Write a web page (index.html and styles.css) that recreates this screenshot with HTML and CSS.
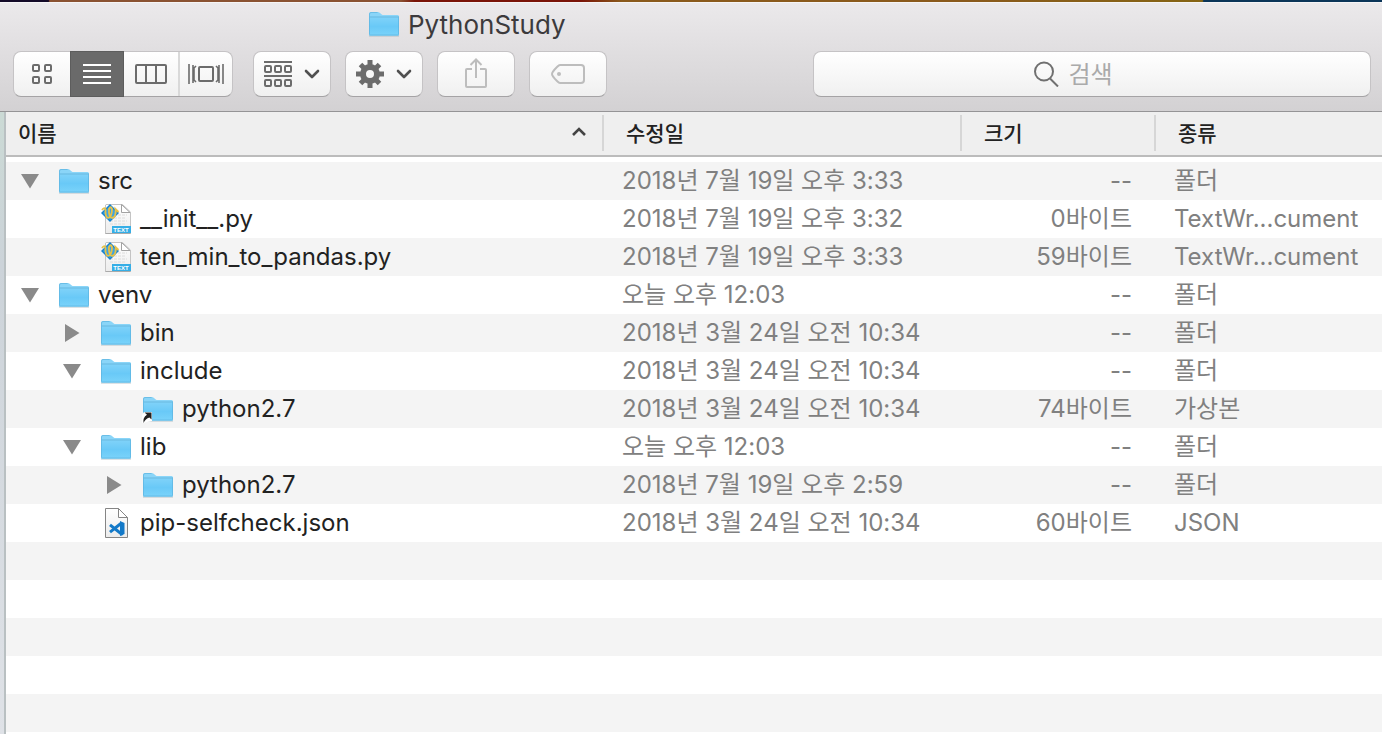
FILE: index.html
```html
<!DOCTYPE html>
<html lang="ko">
<head>
<meta charset="utf-8">
<title>PythonStudy</title>
<link rel="stylesheet" href="styles.css">
</head>
<body>
<svg class="defs" aria-hidden="true">
  <linearGradient id="g-folder" x1="0" y1="0" x2="0" y2="1"><stop offset="0" stop-color="#7fd2f9"/><stop offset=".5" stop-color="#69c9f7"/><stop offset="1" stop-color="#7ad3fa"/></linearGradient>
  <linearGradient id="g-page" x1="0" y1="0" x2="0" y2="1"><stop offset="0" stop-color="#ffffff"/><stop offset="1" stop-color="#ececec"/></linearGradient>
  <symbol id="folder" viewBox="0 0 32 26">
    <path d="M1 24.5H31V25.4H1z" fill="#a9b6bd"/>
    <path d="M1 3Q1 1 3 1H9.6Q11 1 12 2T14.5 4H29.5Q31 4 31 5.5V23Q31 24.5 29.5 24.5H2.5Q1 24.5 1 23z" fill="#8ad5f8"/>
    <path d="M1 6.5H31V23Q31 24.5 29.5 24.5H2.5Q1 24.5 1 23z" fill="url(#g-folder)"/>
    <path d="M1.5 6H30.5" stroke="#64b7e0"/>
    <path d="M1.5 23.5V3Q1.5 1.5 3 1.5H9.5M30.5 5.5V23.5M1.5 24H30.5" fill="none" stroke="#5db4df" stroke-opacity=".7"/>
  </symbol>
  <symbol id="alias" viewBox="0 0 32 26" overflow="visible">
    <use href="#folder" width="32" height="26"/>
    <path d="M0 27V19L2 16H10V25z" fill="#fff"/>
    <path d="M2.5 16.5H9.5V23.5L7.4 21.5Q3.5 22.500 1.5 27Q.5 21.5 5 18.8z" fill="#222"/>
  </symbol>
  <symbol id="textdoc" viewBox="0 0 32 32">
    <path d="M6 1.5H22.5L30.5 9V30.5H5.5V2z" fill="url(#g-page)" stroke="#c4c4c4"/>
    <path d="M5.5 30.5H30.5" stroke="#aaa"/>
    <path d="M21.5 1.5V9.5H30z" fill="#fff" stroke="#a2a2a2"/>
    <path d="M18 12H27M14 15H26M10 18H27M10 21H25" stroke="#dcdcdc" stroke-dasharray="3 1"/>
    <path d="M10 1L19 10L10 19L1 10z" fill="#1681cf"/>
    <path d="M10 3L17 10L10 17L3 10z" fill="#3ba4e3"/>
    <path d="M2 7Q4 4 5.5 6Q5 14 8 15Q12 14 12 6Q11 2.5 9 6Q8.500 14 12 15Q16.5 14 15.500 6L18.500 9" fill="none" stroke="#e6c24a" stroke-width="1.8"/>
    <path d="M12 23H31V30H12z" fill="#36aee6"/>
  </symbol>
  <symbol id="codedoc" viewBox="0 0 32 32">
    <path d="M5.5 1.5H18.5L27.5 10.5V30.5H5.5z" fill="url(#g-page)" stroke="#858585"/>
    <path d="M18.5 1.5V10.5H27.5z" fill="#fff" stroke="#858585"/>
    <path d="M21.500 16V27L10 17.800M21.500 16L10 25.200" fill="none" stroke="#1379c8" stroke-width="3" stroke-linejoin="round"/>
    <path d="M20 14L24.500 16V27L20 29z" fill="#1379c8"/>
  </symbol>
  <symbol id="open" viewBox="0 0 20 20"><path d="M1 3H19L10 17.5z" fill="#8a8a8a"/></symbol>
  <symbol id="closed" viewBox="0 0 20 20"><path d="M3 1V19L17.5 10z" fill="#8a8a8a"/></symbol>
  <symbol id="chevron" viewBox="0 0 16 10"><path d="M2 2L8 8L14 2" fill="none" stroke="#505050" stroke-width="2.6" stroke-linecap="round" stroke-linejoin="round"/></symbol>
</svg>

<div class="wallpaper"></div>
<main class="window">
  <header class="chrome">
    <h1 class="title"><svg class="icon-folder"><use href="#folder"/></svg>PythonStudy</h1>
    <div class="toolbar">
      <div class="views" role="group" aria-label="보기">
        <button class="view" aria-label="아이콘"><svg width="22" height="22" fill="none" stroke="#6c6c6c" stroke-width="2"><rect x="2" y="2" width="6" height="6" rx="1"/><rect x="14" y="2" width="6" height="6" rx="1"/><rect x="2" y="14" width="6" height="6" rx="1"/><rect x="14" y="14" width="6" height="6" rx="1"/></svg></button>
        <button class="view active" aria-label="목록" aria-pressed="true"><svg width="28" height="20" stroke="#fff" stroke-width="2"><path d="M0 1H28M0 7H28M0 13H28M0 19H28"/></svg></button>
        <button class="view" aria-label="계층"><svg width="32" height="20" fill="none" stroke="#6c6c6c" stroke-width="2"><rect x="1" y="1" width="30" height="18" rx="1"/><path d="M11 1V19M21 1V19"/></svg></button>
        <button class="view split" aria-label="갤러리"><svg width="36" height="20" fill="none" stroke="#6c6c6c" stroke-width="2"><rect x="11" y="3" width="14" height="14" rx="1"/><path d="M1 0V20M35 0V20M8 2L6 4V16L8 18M28 2L30 4V16L28 18M5 1V19M31 1V19" stroke-width="1.6"/></svg></button>
      </div>
      <button class="tool arrange" aria-label="정렬"><svg width="28" height="26" fill="none" stroke="#6c6c6c" stroke-width="2"><path d="M0 1H28M0 15H28"/><rect x="1" y="5" width="6" height="6" rx="1"/><rect x="11" y="5" width="6" height="6" rx="1"/><rect x="21" y="5" width="6" height="6" rx="1"/><rect x="1" y="19" width="6" height="6" rx="1"/><rect x="11" y="19" width="6" height="6" rx="1"/><rect x="21" y="19" width="6" height="6" rx="1"/></svg><svg class="icon-chevron"><use href="#chevron"/></svg></button>
      <button class="tool" aria-label="동작"><svg width="28" height="28" viewBox="-14 -14 28 28"><circle r="7" fill="none" stroke="#6c6c6c" stroke-width="6"/><path d="M0 -14V-8M0 14V8M-14 0H-8M14 0H8M-9.5 -9.5L-6 -6M9.5 9.5L6 6M-9.5 9.5L-6 6M9.5 -9.5L6 -6" stroke="#6c6c6c" stroke-width="5"/></svg><svg class="icon-chevron"><use href="#chevron"/></svg></button>
      <button class="tool" aria-label="공유"><svg width="24" height="32" fill="none" stroke="#bdbdbd" stroke-width="2"><path d="M8 11H3Q2 11 2 12V28Q2 29 3 29H21Q22 29 22 28V12Q22 11 21 11H16M12 20V2M6.5 7L12 1.5L17.5 7"/></svg></button>
      <button class="tool" aria-label="태그"><svg width="34" height="20" fill="none" stroke="#bdbdbd" stroke-width="2"><path d="M9 1H30Q33 1 33 4V16Q33 19 30 19H9Q8 19 6 17Q1 12 1 10Q1 8 6 3Q8 1 9 1z"/><circle cx="8" cy="10" r="2" fill="#bdbdbd" stroke="none"/></svg></button>
      <label class="search"><svg width="25" height="26" fill="none" stroke="#707070" stroke-width="2"><circle cx="10" cy="10.5" r="9"/><path d="M16 17.5L24 25.5"/></svg><input type="search" placeholder="검색" aria-label="검색"></label>
    </div>
  </header>

  <div class="listing">
    <table class="files">
      <colgroup><col><col class="col-date"><col class="col-size"><col class="col-kind"></colgroup>
      <thead>
        <tr>
          <th aria-sort="ascending"><div class="head first"><span>이름</span><svg width="16" height="10"><path d="M2 8L8 2L14 8" fill="none" stroke="#444" stroke-width="2.6"/></svg></div></th>
          <th><div class="head">수정일</div></th>
          <th><div class="head">크기</div></th>
          <th><div class="head last">종류</div></th>
        </tr>
      </thead>
      <tbody>
        <tr><td><div class="name"><button class="toggle" aria-label="src 닫기"><svg><use href="#open"/></svg></button><svg class="icon-folder"><use href="#folder"/></svg>src</div></td><td>2018년 7월 19일 오후 3:33</td><td class="size">--</td><td>폴더</td></tr>
        <tr><td><div class="name level-1"><span class="toggle"></span><svg class="icon-doc"><use href="#textdoc"/><text x="21" y="29" class="doc-tag">TEXT</text></svg>__init__.py</div></td><td>2018년 7월 19일 오후 3:32</td><td class="size">0바이트</td><td>TextWr...cument</td></tr>
        <tr><td><div class="name level-1"><span class="toggle"></span><svg class="icon-doc"><use href="#textdoc"/><text x="21" y="29" class="doc-tag">TEXT</text></svg>ten_min_to_pandas.py</div></td><td>2018년 7월 19일 오후 3:33</td><td class="size">59바이트</td><td>TextWr...cument</td></tr>
        <tr><td><div class="name"><button class="toggle" aria-label="venv 닫기"><svg><use href="#open"/></svg></button><svg class="icon-folder"><use href="#folder"/></svg>venv</div></td><td>오늘 오후 12:03</td><td class="size">--</td><td>폴더</td></tr>
        <tr><td><div class="name level-1"><button class="toggle" aria-label="bin 열기"><svg><use href="#closed"/></svg></button><svg class="icon-folder"><use href="#folder"/></svg>bin</div></td><td>2018년 3월 24일 오전 10:34</td><td class="size">--</td><td>폴더</td></tr>
        <tr><td><div class="name level-1"><button class="toggle" aria-label="include 닫기"><svg><use href="#open"/></svg></button><svg class="icon-folder"><use href="#folder"/></svg>include</div></td><td>2018년 3월 24일 오전 10:34</td><td class="size">--</td><td>폴더</td></tr>
        <tr><td><div class="name level-2"><span class="toggle"></span><svg class="icon-folder"><use href="#alias"/></svg>python2.7</div></td><td>2018년 3월 24일 오전 10:34</td><td class="size">74바이트</td><td>가상본</td></tr>
        <tr><td><div class="name level-1"><button class="toggle" aria-label="lib 닫기"><svg><use href="#open"/></svg></button><svg class="icon-folder"><use href="#folder"/></svg>lib</div></td><td>오늘 오후 12:03</td><td class="size">--</td><td>폴더</td></tr>
        <tr><td><div class="name level-2"><button class="toggle" aria-label="python2.7 열기"><svg><use href="#closed"/></svg></button><svg class="icon-folder"><use href="#folder"/></svg>python2.7</div></td><td>2018년 7월 19일 오후 2:59</td><td class="size">--</td><td>폴더</td></tr>
        <tr><td><div class="name level-1"><span class="toggle"></span><svg class="icon-doc"><use href="#codedoc"/></svg>pip-selfcheck.json</div></td><td>2018년 3월 24일 오전 10:34</td><td class="size">60바이트</td><td>JSON</td></tr>
      </tbody>
    </table>
    <div class="blank"></div>
  </div>
</main>
</body>
</html>
```

FILE: styles.css
```css
* { box-sizing: border-box; }

body {
  margin: 0;
  min-height: 100vh;
  display: flex;
  flex-direction: column;
  overflow: hidden;
  font-family: Inter, "Noto Sans CJK KR", sans-serif;
  font-size: 24px;
  color: #222;
}

button, input { font: inherit; }
svg { flex: none; }
.defs { position: absolute; width: 0; height: 0; }
.doc-tag { font: bold 6px "Liberation Sans", sans-serif; fill: #fff; text-anchor: middle; }

.wallpaper {
  height: 2px;
  background: linear-gradient(90deg, #140a28 0 3.5%, #8a5232 3.6% 29%, #7a1408 30% 42%, #8a5a1c 45% 70%, #856414 87%, #0b3558 87.1%);
}

.window { flex: 1; display: flex; flex-direction: column; }

.chrome {
  height: 110px;
  padding: 4px 11px 0 13px;
  background: linear-gradient(#ebe9eb, #d3d1d3);
  border-top: 1px solid #f6f5f6;
  border-bottom: 1px solid #959496;
}

.title {
  display: flex;
  align-items: center;
  gap: 8px;
  height: 34px;
  margin: 0 0 10px;
  padding-left: 355px;
  font-size: 26px;
  font-weight: 400;
  color: #3c3a3c;
}

.icon-folder { width: 32px; height: 26px; overflow: visible; }
.icon-doc { width: 32px; height: 32px; }
.icon-chevron { width: 16px; height: 10px; }

.toolbar { display: flex; gap: 14px; }

.views, .tool, .search {
  height: 46px;
  border: 1px solid #c5c3c5;
  border-bottom-color: #a5a3a5;
  border-radius: 8px;
  background: linear-gradient(#fff, #f0f0f0);
}

.views { display: flex; width: 220px; margin-right: 6px; }

.view {
  width: 54px;
  display: flex;
  align-items: center;
  justify-content: center;
  padding: 0;
  border: 0;
  background: none;
}
.view:first-child { width: 56px; }
.view.active { background: #6a6a6a; margin: -1px 0; box-shadow: inset 0 0 0 1px #5d5d5d; }
.view.split { border-left: 2px solid #d9d9d9; }

.tool {
  display: flex;
  align-items: center;
  justify-content: center;
  gap: 12px;
  width: 78px;
  padding: 0;
}

.search {
  flex: 1;
  display: flex;
  align-items: center;
  justify-content: center;
  gap: 10px;
  margin-left: 192px;
}
.search input {
  width: 82px;
  padding: 0;
  border: 0;
  outline: 0;
  background: none;
}
.search input::placeholder { color: #aaa; opacity: 1; }

.listing {
  flex: 1;
  display: flex;
  flex-direction: column;
  padding-left: 6px;
  background: linear-gradient(90deg, transparent 4px, #b9c0c2 4px 6px, #fff 6px), linear-gradient(#cbdad5, #ccd3d9 25%, #dfe2e7);
}

.files { width: 100%; table-layout: fixed; border-collapse: separate; border-spacing: 0; }
.col-date { width: 358px; }
.col-size { width: 194px; }
.col-kind { width: 226px; }

th {
  height: 45px;
  padding: 0 0 1px;
  border-bottom: 2px solid #bcbcbc;
  background: #efefef;
  font-size: 21px;
  font-weight: 500;
  text-align: left;
}
.head {
  display: flex;
  align-items: center;
  justify-content: space-between;
  height: 36px;
  padding: 0 15px 2px 22px;
  border-right: 2px solid #d6d6d6;
}
.head.first { padding-left: 12px; }
.head.last { border-right: 0; }

tbody::before { content: ""; display: block; height: 5px; background: #fff; }
tbody tr { background: #fff; }
tbody tr:nth-child(odd) { background: #f4f4f4; }

td {
  height: 38px;
  padding: 0 0 0 18px;
  line-height: 38px;
  color: #808080;
  white-space: nowrap;
}
td:first-child { padding: 0; color: #222; }
td.size { padding: 0 24px 0 0; text-align: right; }

.name { display: flex; align-items: center; gap: 8px; height: 38px; padding-left: 14px; }
.level-1 { padding-left: 56px; }
.level-2 { padding-left: 98px; }

.toggle {
  display: flex;
  width: 20px;
  height: 20px;
  margin-right: 10px;
  padding: 0;
  border: 0;
  background: none;
}
.toggle svg { width: 20px; height: 20px; }

.blank {
  flex: 1;
  background: repeating-linear-gradient(#f4f4f4 0 38px, #fff 38px 76px);
}
```
